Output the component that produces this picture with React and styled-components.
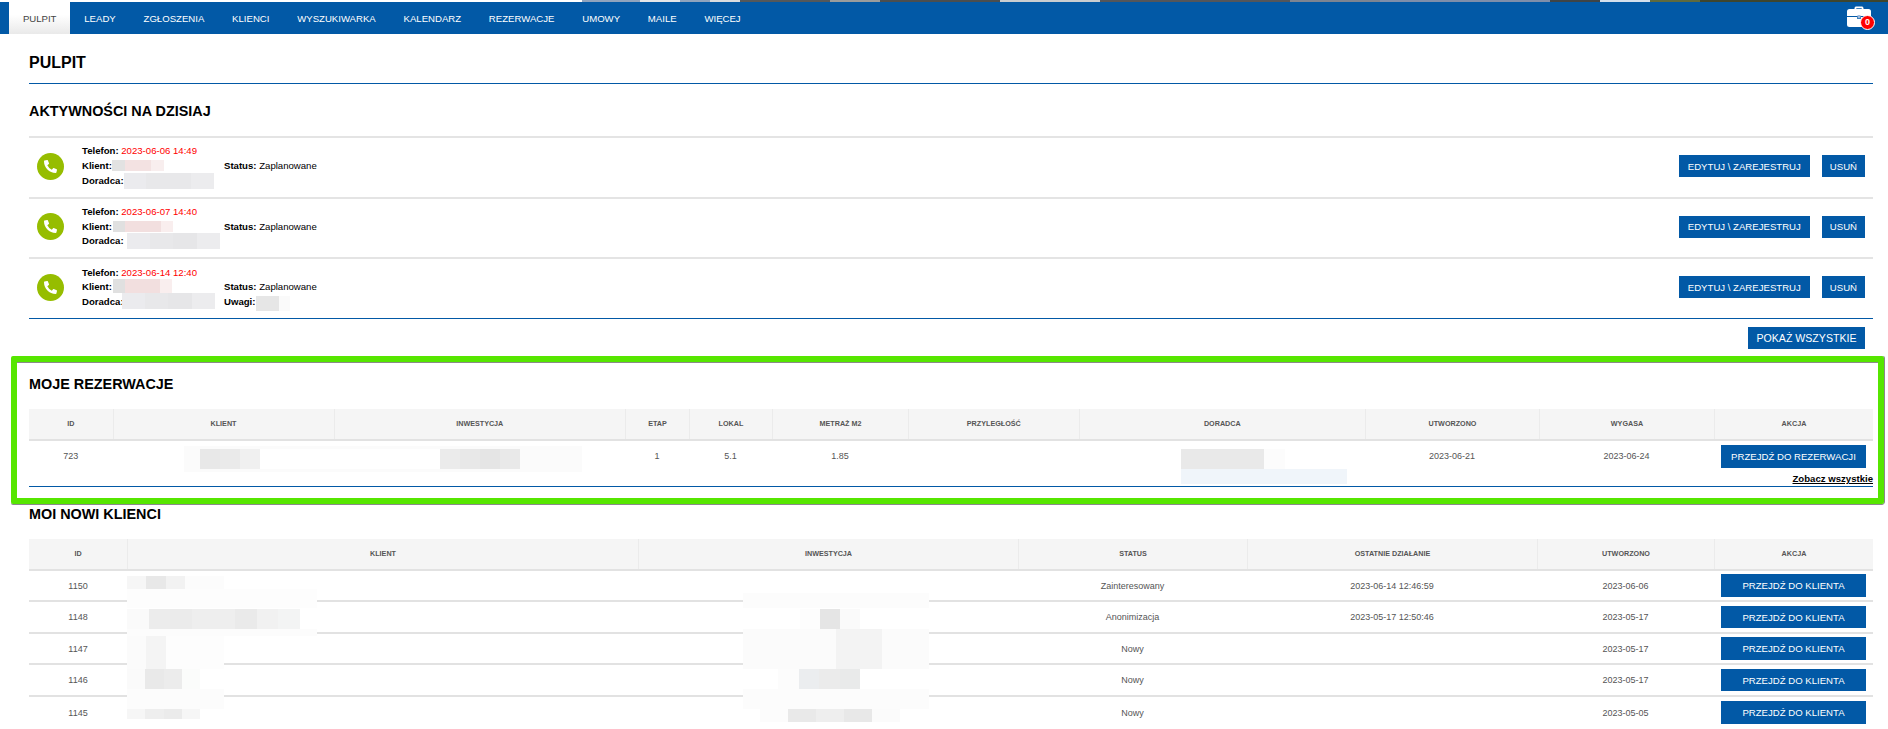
import React from "react";
import styled, { createGlobalStyle } from "styled-components";
import { FaPhoneAlt } from "react-icons/fa";

const BLUE = "#0259a6";

const GlobalStyle = createGlobalStyle`
  html, body { margin: 0; padding: 0; background: #fff; overflow: hidden; }
  body { font-family: "Liberation Sans", Arial, sans-serif; color: #000; }
  * { box-sizing: border-box; }
`;

/* -------------------- NAV -------------------- */
const Root = styled.div`
  position: relative;
  width: 1888px;
  height: 729px;
  overflow: hidden;
`;

const PhotoStrip = styled.div`
  height: 2px;
  background: linear-gradient(
    90deg,
    #fff 0 582px,
    #8fa3bd 582px 640px,
    #e4e6e8 640px 680px,
    #8ea3bd 680px 710px,
    #d9dcdf 710px 740px,
    #55585a 740px 830px,
    #9a9c9c 830px 880px,
    #4b4e4f 880px 1000px,
    #c9cdd0 1000px 1100px,
    #54565a 1100px 1290px,
    #7d8491 1290px 1380px,
    #7e8eaa 1380px 1550px,
    #3f4446 1550px 1600px,
    #d3dfec 1600px 1650px,
    #5f6a3d 1650px 1700px,
    #3e452d 1700px 1888px
  );
`;

const NavBar = styled.nav`
  height: 32px;
  background: ${BLUE};
  display: flex;
  padding-left: 9px;
`;

const NavItem = styled.a`
  display: flex;
  align-items: center;
  padding: 0 13.9px;
  font-size: 9.6px;
  color: ${({ $active }) => ($active ? "#444" : "#fff")};
  background: ${({ $active }) => ($active ? "linear-gradient(#fff 40%, #e9e9e9)" : "none")};
`;

const Cart = styled.div`
  position: relative;
  margin: 4px 17px 0 auto;
  width: 24px;
  height: 21px;
`;

const CartBadge = styled.span`
  position: absolute;
  right: -4px;
  bottom: -3px;
  width: 15px;
  height: 15px;
  border-radius: 50%;
  background: #f00;
  border: 1px solid #fff;
  color: #fff;
  font-size: 9px;
  font-weight: 700;
  line-height: 13px;
  text-align: center;
`;

/* -------------------- CONTENT -------------------- */
const Page = styled.main`
  padding: 0 4px 0 11px;
`;

const Section = styled.section`
  padding: 0 11px 0 18px;
`;

const TitleBlock = styled.div`
  padding-top: 20px;
  height: 50px;
  border-bottom: 1px solid ${BLUE};
`;

const Title = styled.h1`
  margin: 0;
  font-size: 16px;
  line-height: 18px;
  font-weight: 700;
`;

const Heading = styled.h2`
  margin: 0;
  font-size: 14.4px;
  line-height: 16px;
  font-weight: 700;
`;

const ActivitiesHeading = styled(Heading)`
  padding: 19px 0 17px;
`;

const ActivityList = styled.div`
  border-bottom: 1px solid ${BLUE};
`;

const ActivityRow = styled.div`
  height: 60.6px;
  display: flex;
  align-items: center;
  padding: 0 8px 2px;
  border-top: 2px solid #e4e4e4;
`;

const PhoneCircle = styled.div`
  flex: none;
  width: 27px;
  height: 27px;
  border-radius: 50%;
  background: #96bd00;
  color: #fff;
  display: flex;
  align-items: center;
  justify-content: center;
  margin-right: 18px;
`;

const Details = styled.div`
  display: grid;
  grid-template-columns: 142px auto;
  font-size: 9.6px;
  line-height: 14.6px;
`;

const Label = styled.b`
  font-weight: 700;
`;

const DateText = styled.span`
  color: #f00;
`;

const Actions = styled.div`
  margin-left: auto;
  display: flex;
  gap: 12px;
`;

const Button = styled.a`
  display: flex;
  align-items: center;
  justify-content: center;
  height: 22px;
  padding: 0 8px;
  background: ${BLUE};
  color: #fff;
  font-size: 9.6px;
  white-space: nowrap;
`;

const EditButton = styled(Button)`
  padding: 0 9px;
`;

const ShowAllRow = styled.div`
  display: flex;
  justify-content: flex-end;
  padding: 8px 8px 7px 0;
`;

const ShowAllButton = styled(Button)`
  width: 117px;
  font-size: 10.6px;
`;

const Highlight = styled.section`
  border: 6px solid #56e600;
  border-radius: 2px;
  padding: 14px 5px 11px 12px;
  box-shadow: 0 1px 0 #8a8a8a, 1px 0 0 #8a8a8a, inset 0 1px 0 #8a8a8a;
`;

const TableHeadRow = styled.div`
  margin-top: 17px;
  display: grid;
  grid-template-columns: ${({ $cols }) => $cols};
  height: 32px;
  background: #f5f5f5;
  border-bottom: 2px solid #e2e2e2;
`;

const HeadCell = styled.div`
  display: flex;
  align-items: center;
  justify-content: center;
  font-size: 7.2px;
  font-weight: 700;
  color: #555;
  border-left: 1px solid #ebebeb;
  &:first-child { border-left: none; }
`;

const TableRow = styled.div`
  display: grid;
  grid-template-columns: ${({ $cols }) => $cols};
  height: ${({ $h }) => $h || "31.5px"};
  ${({ $lined }) => $lined && "border-bottom: 2px solid #e2e2e2;"}
`;

const Cell = styled.div`
  display: flex;
  align-items: center;
  justify-content: center;
  font-size: 9px;
  color: #555;
`;

const RowButton = styled(Button)`
  width: 145px;
  height: 22.6px;
  padding: 0;
`;

const LinkRow = styled.div`
  height: 15px;
  display: flex;
  justify-content: flex-end;
  align-items: center;
  border-bottom: 1px solid ${BLUE};
`;

const SeeAll = styled.a`
  font-size: 9.6px;
  font-weight: 700;
  color: #000;
  text-decoration: underline;
`;

const ClientsHeading = styled(Heading)`
  padding-top: 2px;
`;

/* censored data in the screenshot, lies over the rows */
const Mask = styled.div`
  position: absolute;
  left: ${({ $x }) => $x}px;
  top: ${({ $y }) => $y}px;
  width: ${({ $w }) => $w}px;
  height: ${({ $h }) => $h}px;
  background: ${({ $c }) => {
    const list = $c.split(" ");
    const step = 100 / list.length;
    return `linear-gradient(90deg, ${list
      .map((c, i) => `${c} ${i * step}% ${(i + 1) * step}%`)
      .join(", ")})`;
  }};
`;

/* -------------------- DATA -------------------- */
const NAV = ["PULPIT", "LEADY", "ZGŁOSZENIA", "KLIENCI", "WYSZUKIWARKA", "KALENDARZ", "REZERWACJE", "UMOWY", "MAILE", "WIĘCEJ"];

const ACTIVITIES = [
  { date: "2023-06-06 14:49" },
  { date: "2023-06-07 14:40" },
  { date: "2023-06-14 12:40", notes: true },
];

const RES_COLS = "83.5px 221px 291.5px 64px 83px 136px 170.6px 286.4px 174px 175px 159px";
const RES_HEAD = ["ID", "KLIENT", "INWESTYCJA", "ETAP", "LOKAL", "METRAŻ M2", "PRZYLEGŁOŚĆ", "DORADCA", "UTWORZONO", "WYGASA", "AKCJA"];

const CLIENT_COLS = "98px 511px 380px 229px 290px 177px 159px";
const CLIENT_HEAD = ["ID", "KLIENT", "INWESTYCJA", "STATUS", "OSTATNIE DZIAŁANIE", "UTWORZONO", "AKCJA"];
const CLIENTS = [
  { id: 1150, status: "Zainteresowany", last: "2023-06-14 12:46:59", created: "2023-06-06" },
  { id: 1148, status: "Anonimizacja", last: "2023-05-17 12:50:46", created: "2023-05-17" },
  { id: 1147, status: "Nowy", last: "", created: "2023-05-17" },
  { id: 1146, status: "Nowy", last: "", created: "2023-05-17" },
  { id: 1145, status: "Nowy", last: "", created: "2023-05-05" },
];

const MASKS = [
  { x: 112, y: 160, w: 52, h: 11, c: "#e2e2e2 #f3e2e2 #f3e2e2 #f8eeee" },
  { x: 124, y: 173, w: 90, h: 16, c: "#ebebee #e8e8ea #e8e8ea #ececee" },
  { x: 113, y: 221, w: 60, h: 11, c: "#e0e0e0 #f2dfdf #f2dfdf #f2dfdf #f9eeee" },
  { x: 127, y: 233, w: 93, h: 16, c: "#ebebee #e8e8ea #e6e6e8 #ececee" },
  { x: 113, y: 279, w: 59, h: 14, c: "#e0e0e0 #f2dfdf #f2dfdf #f2dfdf #f9eeee" },
  { x: 122, y: 293, w: 93, h: 16, c: "#ebebee #e8e8ea #e6e6e8 #ececee" },
  { x: 256, y: 296, w: 34, h: 15, c: "#e6e6e6 #e6e6e6 #fafafa" },
  // rezerwacja
  { x: 184, y: 446, w: 398, h: 26, c: "#fbfbfb" },
  { x: 200, y: 449, w: 60, h: 20, c: "#e8e8e8 #eaeaea #f0f0f0" },
  { x: 260, y: 449, w: 180, h: 20, c: "#ffffff" },
  { x: 440, y: 449, w: 80, h: 20, c: "#ebebeb #e8e8e8 #e5e5e5 #e9e9e9" },
  { x: 1181, y: 449, w: 166, h: 20, c: "#e9e9e9 #e9e9e9 #e9e9e9 #e9e9e9 #fcfcfc #ffffff #ffffff #ffffff" },
  { x: 1181, y: 469, w: 166, h: 15, c: "#f0f5fa" },
  // klienci
  { x: 127, y: 576, w: 97, h: 13, c: "#f6f6f6 #e8e8e8 #f2f2f2 #fcfcfc #fcfcfc" },
  { x: 127, y: 589, w: 190, h: 19, c: "#fdfdfd" },
  { x: 127, y: 609, w: 173, h: 20, c: "#fafafa #ececec #ebebeb #eeeeee #eeeeee #eaeaea #f1f1f1 #f3f4f4" },
  { x: 127, y: 629, w: 190, h: 7, c: "#fcfcfc" },
  { x: 127, y: 636, w: 97, h: 33, c: "#fbfbfb #f4f4f4 #fdfdfd #fdfdfd #fdfdfd" },
  { x: 127, y: 669, w: 73, h: 20, c: "#fafafa #e9e9e9 #ececec #fbfcfb" },
  { x: 127, y: 689, w: 97, h: 20, c: "#fcfcfc" },
  { x: 127, y: 709, w: 73, h: 10, c: "#f6f6f6 #eeeeee #ebebeb #f6f6f6" },
  { x: 743, y: 593, w: 186, h: 15, c: "#fcfcfc" },
  { x: 800, y: 609, w: 60, h: 20, c: "#fdfdfd #e5e5e5 #fafafa" },
  { x: 743, y: 629, w: 186, h: 40, c: "#fbfbfb #fbfbfb #f3f3f3 #fbfbfb" },
  { x: 778, y: 669, w: 82, h: 20, c: "#fcfcfc #ebedef #ebebeb #e9eaea" },
  { x: 743, y: 689, w: 186, h: 20, c: "#fcfcfc" },
  { x: 760, y: 709, w: 140, h: 13, c: "#fcfcfc #e9e9e9 #eeeeee #e8e8e8 #fbfbfb" },
];

/* -------------------- COMPONENT -------------------- */
function Briefcase() {
  return (
    <svg width="24" height="21" viewBox="0 0 24 21">
      <path d="M7.5 4V2.2C7.5 1 8.4.4 9.4.4h5.2c1 0 1.9.6 1.9 1.8V4h-1.8V2.2H9.3V4z" fill="#fff" />
      <path d="M2.5 3h19A2.5 2.5 0 0 1 24 5.5V10H0V5.5A2.5 2.5 0 0 1 2.5 3z" fill="#fff" />
      <path d="M0 11h10v1.8h4V11h10v7.5a2.5 2.5 0 0 1-2.5 2.5h-19A2.5 2.5 0 0 1 0 18.500z" fill="#fff" />
      <rect x="10.500" y="9" width="3" height="3" fill="#9db9dc" />
    </svg>
  );
}

function Activity({ date, notes }) {
  return (
    <ActivityRow>
      <PhoneCircle>
        <FaPhoneAlt size={13} />
      </PhoneCircle>
      <Details>
        <div><Label>Telefon:</Label> <DateText>{date}</DateText></div>
        <div />
        <div><Label>Klient:</Label></div>
        <div><Label>Status:</Label> Zaplanowane</div>
        <div><Label>Doradca:</Label></div>
        <div>{notes && <Label>Uwagi:</Label>}</div>
      </Details>
      <Actions>
        <EditButton>EDYTUJ \ ZAREJESTRUJ</EditButton>
        <Button>USUŃ</Button>
      </Actions>
    </ActivityRow>
  );
}

function TableHead({ cols, names }) {
  return (
    <TableHeadRow $cols={cols}>
      {names.map((name) => (
        <HeadCell key={name}>{name}</HeadCell>
      ))}
    </TableHeadRow>
  );
}

export default function App() {
  return (
    <Root>
      <GlobalStyle />
      <PhotoStrip />
      <NavBar>
        {NAV.map((name, i) => (
          <NavItem key={name} $active={i === 0}>{name}</NavItem>
        ))}
        <Cart>
          <Briefcase />
          <CartBadge>0</CartBadge>
        </Cart>
      </NavBar>

      <Page>
        <Section>
          <TitleBlock>
            <Title>PULPIT</Title>
          </TitleBlock>
          <ActivitiesHeading>AKTYWNOŚCI NA DZISIAJ</ActivitiesHeading>
          <ActivityList>
            {ACTIVITIES.map((a) => (
              <Activity key={a.date} {...a} />
            ))}
          </ActivityList>
          <ShowAllRow>
            <ShowAllButton>POKAŻ WSZYSTKIE</ShowAllButton>
          </ShowAllRow>
        </Section>

        <Highlight>
          <Heading>MOJE REZERWACJE</Heading>
          <TableHead cols={RES_COLS} names={RES_HEAD} />
          <TableRow $cols={RES_COLS} $h="31px">
            <Cell>723</Cell>
            <Cell />
            <Cell />
            <Cell>1</Cell>
            <Cell>5.1</Cell>
            <Cell>1.85</Cell>
            <Cell />
            <Cell />
            <Cell>2023-06-21</Cell>
            <Cell>2023-06-24</Cell>
            <Cell><RowButton>PRZEJDŹ DO REZERWACJI</RowButton></Cell>
          </TableRow>
          <LinkRow>
            <SeeAll>Zobacz wszystkie</SeeAll>
          </LinkRow>
        </Highlight>

        <Section>
          <ClientsHeading>MOI NOWI KLIENCI</ClientsHeading>
          <TableHead cols={CLIENT_COLS} names={CLIENT_HEAD} />
          {CLIENTS.map((c, i) => (
            <TableRow key={c.id} $cols={CLIENT_COLS} $lined={i < CLIENTS.length - 1}>
              <Cell>{c.id}</Cell>
              <Cell />
              <Cell />
              <Cell>{c.status}</Cell>
              <Cell>{c.last}</Cell>
              <Cell>{c.created}</Cell>
              <Cell><RowButton>PRZEJDŹ DO KLIENTA</RowButton></Cell>
            </TableRow>
          ))}
        </Section>
      </Page>

      {MASKS.map((m) => (
        <Mask key={`${m.x}-${m.y}`} $x={m.x} $y={m.y} $w={m.w} $h={m.h} $c={m.c} />
      ))}
    </Root>
  );
}
